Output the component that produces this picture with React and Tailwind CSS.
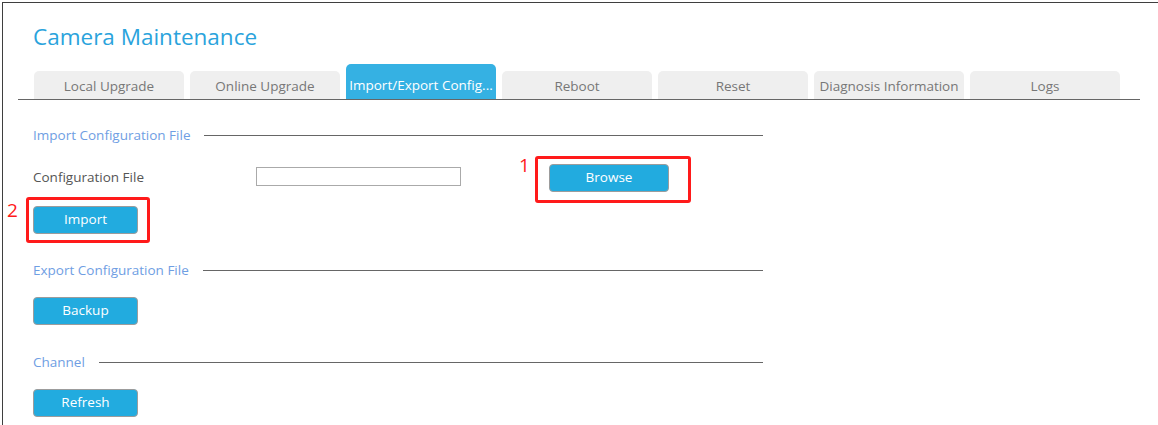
import React from "react";

const font = { fontFamily: '"Open Sans", "Noto Sans", "Liberation Sans", sans-serif' };

const tabs = [
  "Local Upgrade",
  "Online Upgrade",
  "Import/Export Config...",
  "Reboot",
  "Reset",
  "Diagnosis Information",
  "Logs",
];

function Section({ label }) {
  return (
    <div className="flex items-center h-[20px] w-[730px]">
      <span className="text-[13.5px] text-[#6f9ee3] whitespace-nowrap">{label}</span>
      <div className="flex-1 h-px bg-[#666] ml-[14px]" />
    </div>
  );
}

function Btn({ children, w = "w-[105px]" }) {
  return (
    <button className={`${w} h-[28px] rounded-[4px] border border-[#9c9c9c] bg-[#22abdf] text-white text-[13.5px] leading-none flex items-center justify-center`}>
      {children}
    </button>
  );
}

export default function App() {
  return (
    <div className="relative w-[1158px] h-[425px] bg-white overflow-hidden" style={font}>
      <div className="ml-[2px] mt-[2px] h-[423px] border-t border-l border-[#3f3f3f]">
        <div className="pl-[30px] pt-[18px] text-[22.5px] leading-[32px] text-[#2aa3dc] whitespace-nowrap">
          Camera Maintenance
        </div>
        <div className="ml-[15px] mt-[11px] w-[1122px] h-[36px] border-b border-[#666] flex items-end gap-[6px] pl-[16px]">
          {tabs.map((t, i) =>
            i === 2 ? (
              <div
                key={t}
                className="w-[150px] h-[35px] rounded-t-[5px] bg-[#35b1e3] text-white text-[13.5px] flex items-center justify-center pt-[7px] whitespace-nowrap overflow-hidden"
              >
                {t}
              </div>
            ) : (
              <div
                key={t}
                className="w-[150px] h-[28px] rounded-t-[5px] bg-[#efefef] text-[#777] text-[13.5px] flex items-center justify-center pt-[2px] whitespace-nowrap"
              >
                {t}
              </div>
            )
          )}
        </div>
        <div className="pl-[30px] pt-[25px]">
          <Section label="Import Configuration File" />
          <div className="flex items-center mt-[17px] h-[30px]">
            <span className="w-[223px] text-[13.5px] text-[#555]">Configuration File</span>
            <div className="w-[205px] h-[19px] border border-[#aaa] bg-white mt-[-2px]" />
            <div className="ml-[88px] mt-[2px]">
              <Btn w="w-[120px]">Browse</Btn>
            </div>
          </div>
          <div className="mt-[14px]">
            <Btn>Import</Btn>
          </div>
          <div className="mt-[26px]">
            <Section label="Export Configuration File" />
          </div>
          <div className="mt-[17px]">
            <Btn>Backup</Btn>
          </div>
          <div className="mt-[27px]">
            <Section label="Channel" />
          </div>
          <div className="mt-[17px]">
            <Btn>Refresh</Btn>
          </div>
        </div>
      </div>

      {/* annotations */}
      <div className="absolute left-[535px] top-[156px] w-[156px] h-[47px] border-[3px] border-[#ff1a1a] rounded-[3px]" />
      <div className="absolute left-[519px] top-[153px] text-[19px] leading-[24px] text-[#ff1a1a]">1</div>
      <div className="absolute left-[26px] top-[197px] w-[124px] h-[46px] border-[3px] border-[#ff1a1a] rounded-[3px]" />
      <div className="absolute left-[7px] top-[198px] text-[19px] leading-[24px] text-[#ff1a1a]">2</div>
    </div>
  );
}
